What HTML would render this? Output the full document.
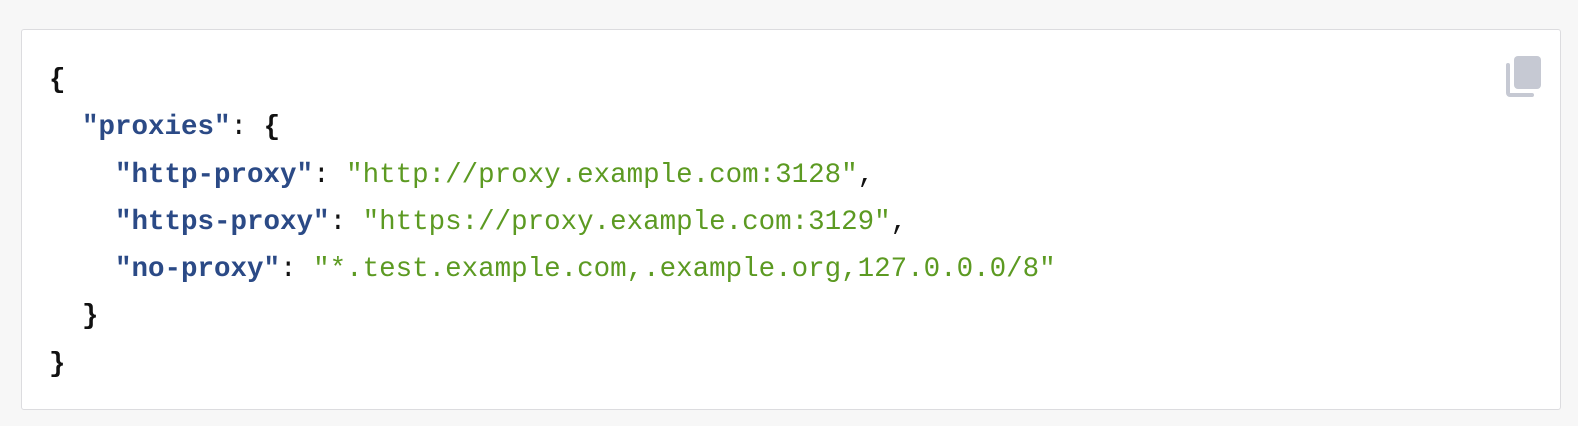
<!DOCTYPE html>
<html><head><style>
html,body{margin:0;padding:0;background:#f7f7f7;width:1578px;height:426px;overflow:hidden}
.box{position:absolute;left:21px;top:29px;width:1540px;height:381px;background:#fff;border:1px solid #dcdcdf;border-radius:3px;box-sizing:border-box}
pre{position:absolute;left:27px;top:27px;margin:0;font-family:"Liberation Mono",monospace;font-size:27.5px;line-height:47.3px;color:#111}
.k{color:#2b4a86;font-weight:bold}
.s{color:#5c9a22}
.b{font-weight:bold}
svg{position:absolute;left:1475px;top:25px}
</style></head><body>
<div class="box">
<pre><span class="b">{</span>
  <span class="k">"proxies"</span>: <span class="b">{</span>
    <span class="k">"http-proxy"</span>: <span class="s">"http://proxy.example.com:3128"</span>,
    <span class="k">"https-proxy"</span>: <span class="s">"https://proxy.example.com:3129"</span>,
    <span class="k">"no-proxy"</span>: <span class="s">"*.test.example.com,.example.org,127.0.0.0/8"</span>
  <span class="b">}</span>
<span class="b">}</span></pre>
<svg width="50" height="50" viewBox="0 0 50 50">
<rect x="17" y="1" width="27" height="33" rx="4" fill="#c6c9d3"/>
<path d="M11 10 V38 a2 2 0 0 0 2 2 H35" stroke="#c6c9d3" stroke-width="4" fill="none" stroke-linecap="round"/>
</svg>
</div>
</body></html>
